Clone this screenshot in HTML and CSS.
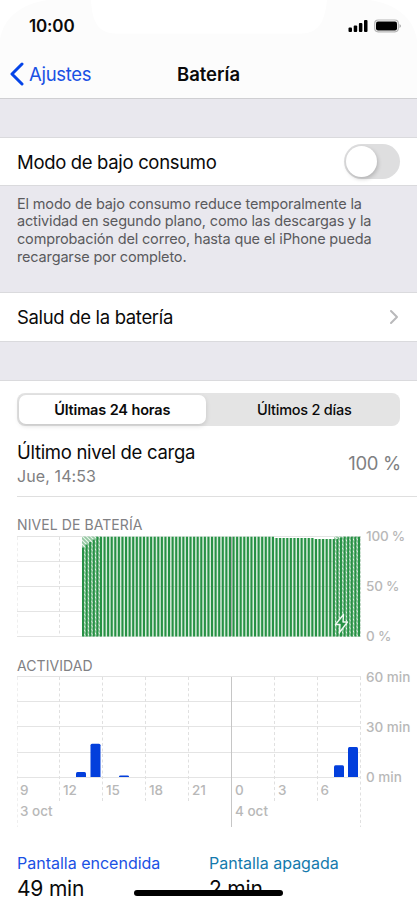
FILE: index.html
```html
<!DOCTYPE html>
<html lang="es">
<head>
<meta charset="utf-8">
<meta name="viewport" content="width=device-width, initial-scale=1">
<title>Batería</title>
<link rel="stylesheet" href="styles.css">
</head>
<body>
<div class="screen">
  <header class="header">
    <svg class="bezel" width="417" height="60" viewBox="0 0 417 60" aria-hidden="true">
      <path fill="#fff" d="M0 0H48C22 3 3 18 0 40ZM417 0H369C395 3 414 18 417 40ZM91 0C92 21 98 33 115 33.500H302C319 33 325 21 327 0Z"/>
    </svg>
    <div class="status">
      <span class="clock">10:00</span>
      <svg class="indicators" width="54" height="14" viewBox="0 0 54 14" aria-hidden="true">
        <rect x="0.500" y="8.500" width="3.500" height="4.500" rx="1"/>
        <rect x="5.700" y="6.500" width="3.500" height="6.500" rx="1"/>
        <rect x="10.900" y="4" width="3.500" height="9" rx="1"/>
        <rect x="16" y="1" width="3.500" height="12" rx="1"/>
        <rect x="26.700" y="1" width="23.600" height="11.800" rx="3.500" fill="none" stroke="#b5b5b5" stroke-width="1.200"/>
        <rect x="28" y="2.500" width="21" height="9" rx="2"/>
        <path d="M51.500 5V9Q53 8 53 7T51.500 5Z" fill="#aaa"/>
      </svg>
    </div>
    <div class="nav">
      <a class="back"><svg width="16" height="24" viewBox="0 0 16 24" aria-hidden="true"><path d="M13 2L3 12L13 22" fill="none" stroke="#0544e8" stroke-width="3" stroke-linecap="round" stroke-linejoin="round"/></svg><span class="back-text">Ajustes</span></a>
      <h1 class="title">Batería</h1>
    </div>
  </header>

  <section class="row row-power">
    <span class="label">Modo de bajo consumo</span>
    <span class="switch"><span class="knob"></span></span>
  </section>
  <p class="note">El modo de bajo consumo reduce temporalmente la<br>actividad en segundo plano, como las descargas y la<br>comprobación del correo, hasta que el iPhone pueda<br>recargarse por completo.</p>
  <section class="row row-health">
    <span class="label">Salud de la batería</span>
    <svg class="chevron" width="10" height="16" viewBox="0 0 10 16" aria-hidden="true"><path d="M2 2L8 8L2 14" fill="none" stroke="#b9b9bb" stroke-width="2" stroke-linecap="round" stroke-linejoin="round"/></svg>
  </section>

  <main class="usage">
    <div class="segments">
      <span class="segment selected">Últimas 24 horas</span>
      <span class="segment other">Últimos 2 días</span>
    </div>
    <div class="last">
      <div class="last-text">
        <span class="last-title">Último nivel de carga</span>
        <span class="last-time">Jue, 14:53</span>
      </div>
      <span class="last-value">100 %</span>
    </div>

    <h2 class="chart-title ct1">NIVEL DE BATERÍA</h2>
    <svg class="chart level" width="400" height="120" viewBox="17 526 400 120">
      <defs>
        <pattern id="hatch" width="4" height="4" patternUnits="userSpaceOnUse">
          <rect width="4" height="4" fill="#edf7ef"/>
          <path d="M-1 -1L5 5M-1 3L1 5M3 -1L5 1" stroke="#93c8a1" stroke-width="1.700"/>
        </pattern>
        <clipPath id="levels"><path d="M82 640V547.500H85V544.500H88.500V542H92V539.500H95.500V536.500H274V538H314V539H338V537.500H343V536.500H361V640Z"/></clipPath>
      </defs>
      <path class="grid" d="M17 536.500H361M17 561.500H361M17 586.500H361M17 611.500H361M17 636.500H361"/>
      <path class="dashed" d="M17 537V636M59.500 537V636M360.500 537V636"/>
      <path fill="#d9eddd" d="M101 536.500H274V538H314V539H335V636.500H101Z"/>
      <path fill="url(#hatch)" d="M82 536.500H101V636.500H82ZM334 536.500H360.500V636.500H334Z"/>
      <path d="M101 561.500H334M101 586.500H334M101 611.500H334" stroke="#9fb9a5" stroke-opacity=".4"/>
      <path d="M231.500 537V636" stroke="#aaa"/>
      <path d="M82 586.500H360.500" stroke="#279145" stroke-width="100" stroke-dasharray="2.100 1.483" clip-path="url(#levels)"/>
      <path d="M343.500 614.500L335.500 624.500H340L339.500 632.500L347.500 622H343Z" fill="#279145" stroke="#f0f9f2" stroke-width="1.400" stroke-linejoin="round"/>
      <g class="axis"><text x="366" y="541">100 %</text><text x="366" y="591">50 %</text><text x="366" y="641">0 %</text></g>
    </svg>

    <h2 class="chart-title ct2">ACTIVIDAD</h2>
    <svg class="chart activity" width="400" height="160" viewBox="17 670 400 160">
      <path class="grid" d="M17 676.500H361M17 701.500H361M17 726.500H361M17 752.500H361M17 777.500H361"/>
      <path class="dashed" d="M17 677V827M59.500 677V802M102.500 677V802M145.500 677V802M188.500 677V802M274.500 677V802M317.500 677V802M360.500 677V827"/>
      <path d="M231.500 677V827" stroke="#c6c6c6"/>
      <g fill="#033fdc">
        <path d="M76 777V773.500Q76 772 77.500 772H84.500Q86 772 86 773.500V777Z"/>
        <path d="M90.500 777V745.200Q90.500 743.700 92 743.700H99Q100.500 743.700 100.500 745.200V777Z"/>
        <path d="M119 777V776.500Q119 775.500 120.500 775.500H127.500Q129 775.500 129 776.500V777Z"/>
        <path d="M334 777V766.800Q334 765.300 335.500 765.300H342.500Q344 765.300 344 766.800V777Z"/>
        <path d="M348 777V748.500Q348 747 349.500 747H356.500Q358 747 358 748.500V777Z"/>
      </g>
      <g class="axis">
        <text x="366" y="682">60 min</text><text x="366" y="732">30 min</text><text x="366" y="782">0 min</text>
        <text x="20" y="795">9</text><text x="63" y="795">12</text><text x="106" y="795">15</text><text x="149" y="795">18</text><text x="192" y="795">21</text><text x="235" y="795">0</text><text x="278" y="795">3</text><text x="320.500" y="795">6</text>
        <text x="20" y="815.500">3 oct</text><text x="235" y="815.500">4 oct</text>
      </g>
    </svg>

    <div class="totals">
      <div class="total on"><span class="total-label">Pantalla encendida</span><span class="total-value">49 min</span></div>
      <div class="total off"><span class="total-label">Pantalla apagada</span><span class="total-value">2 min</span></div>
    </div>
  </main>
  <div class="home-indicator"></div>
</div>
</body>
</html>
```
FILE: styles.css
```css
* { box-sizing: border-box; }
body { margin: 0; background: #fff; font-family: Inter, "Liberation Sans", sans-serif; color: #0a0a0a; }
.screen { position: relative; width: 417px; height: 905px; overflow: hidden; background: #e9e8ee; }
h1, h2, p { margin: 0; font-weight: 400; }
span { white-space: nowrap; }

.header { position: relative; height: 99px; background: #fcfcfc; border-bottom: 1px solid #cfcfd2; }
.bezel { position: absolute; top: 0; left: 0; }
.status { position: relative; height: 50px; display: flex; justify-content: space-between; align-items: flex-start; padding: 16px 15px 0 29px; }
.clock { font-size: 17px; line-height: 20px; font-weight: 600; letter-spacing: -.15px; }
.indicators { margin-top: 3px; }
.nav { position: relative; height: 48px; display: grid; grid-template-columns: 1fr auto 1fr; align-items: center; padding: 0 9px; }
.back { display: flex; align-items: center; gap: 4px; color: #1a51e4; font-size: 18.500px; letter-spacing: -.3px; }
.title { font-size: 18.500px; font-weight: 600; }

.row { display: flex; align-items: center; justify-content: space-between; padding: 0 17px; background: #fff; border-top: 1px solid #dadadd; border-bottom: 1px solid #dadadd; }
.row-power { margin-top: 38px; height: 49px; }
.label { font-size: 18.500px; letter-spacing: -.33px; }
.switch { display: flex; width: 56px; height: 35px; padding: 2px; border-radius: 18px; background: #dededf; }
.knob { width: 31px; height: 31px; border-radius: 50%; background: #fff; box-shadow: 1px 2px 4px #0003; }
.note { height: 106px; padding: 8.500px 17px 0; font-size: 14.500px; line-height: 17.900px; letter-spacing: -.16px; color: #5a5a5d; white-space: nowrap; }
.row-health { height: 50px; }
.chevron { margin-right: 1px; }

.usage { margin-top: 38px; height: 525px; background: #fff; border-top: 1px solid #dadadd; padding-top: 12px; }
.segments { display: grid; grid-template-columns: 1fr 1fr; height: 33px; margin: 0 17px; padding: 2px; border-radius: 8px; background: #e4e4e4; font-size: 14.500px; }
.segment { display: flex; align-items: center; justify-content: center; }
.selected { margin-right: 3px; border-radius: 7px; background: #fff; font-weight: 600; letter-spacing: -.13px; box-shadow: 0 2px 5px #0002; }
.other { font-weight: 500; letter-spacing: -.25px; padding-left: 2px; }
.last { display: flex; justify-content: space-between; align-items: center; height: 71px; margin-left: 17px; padding: 4px 16px 0 0; border-bottom: 1px solid #dfdfdf; }
.last-text { display: flex; flex-direction: column; }
.last-title { font-size: 18.500px; line-height: 26px; letter-spacing: -.3px; }
.last-time { font-size: 16px; line-height: 23px; letter-spacing: .1px; color: #7f7f82; }
.last-value { font-size: 18.500px; letter-spacing: -.3px; color: #7f7f82; }
.chart-title { margin-left: 17px; font-size: 14px; line-height: 18px; letter-spacing: .08px; color: #818184; }
.ct1 { margin-top: 19px; }
.chart { display: block; margin-left: 17px; }
.level { margin-top: -8px; }
.ct2 { margin-top: 11px; }
.activity { margin-top: -5px; }
.grid { fill: none; stroke: #e4e4e4; }
.dashed { fill: none; stroke: #e0e0e0; stroke-dasharray: 3 2.500; }
.axis { fill: #b8b8b8; font-size: 13.500px; font-weight: 500; }
.level .axis { letter-spacing: -.2px; }
.totals { display: grid; grid-template-columns: 192px 1fr; margin: 23px 17px 0; }
.total { display: flex; flex-direction: column; }
.total-label { font-size: 16px; line-height: 21px; }
.total-value { font-size: 21px; line-height: 30px; letter-spacing: -.2px; }
.on .total-label { color: #1a51e4; }
.off .total-label { color: #147aad; }
.home-indicator { position: absolute; left: 134px; top: 890px; width: 149px; height: 6px; border-radius: 3px; background: #000; }
```
